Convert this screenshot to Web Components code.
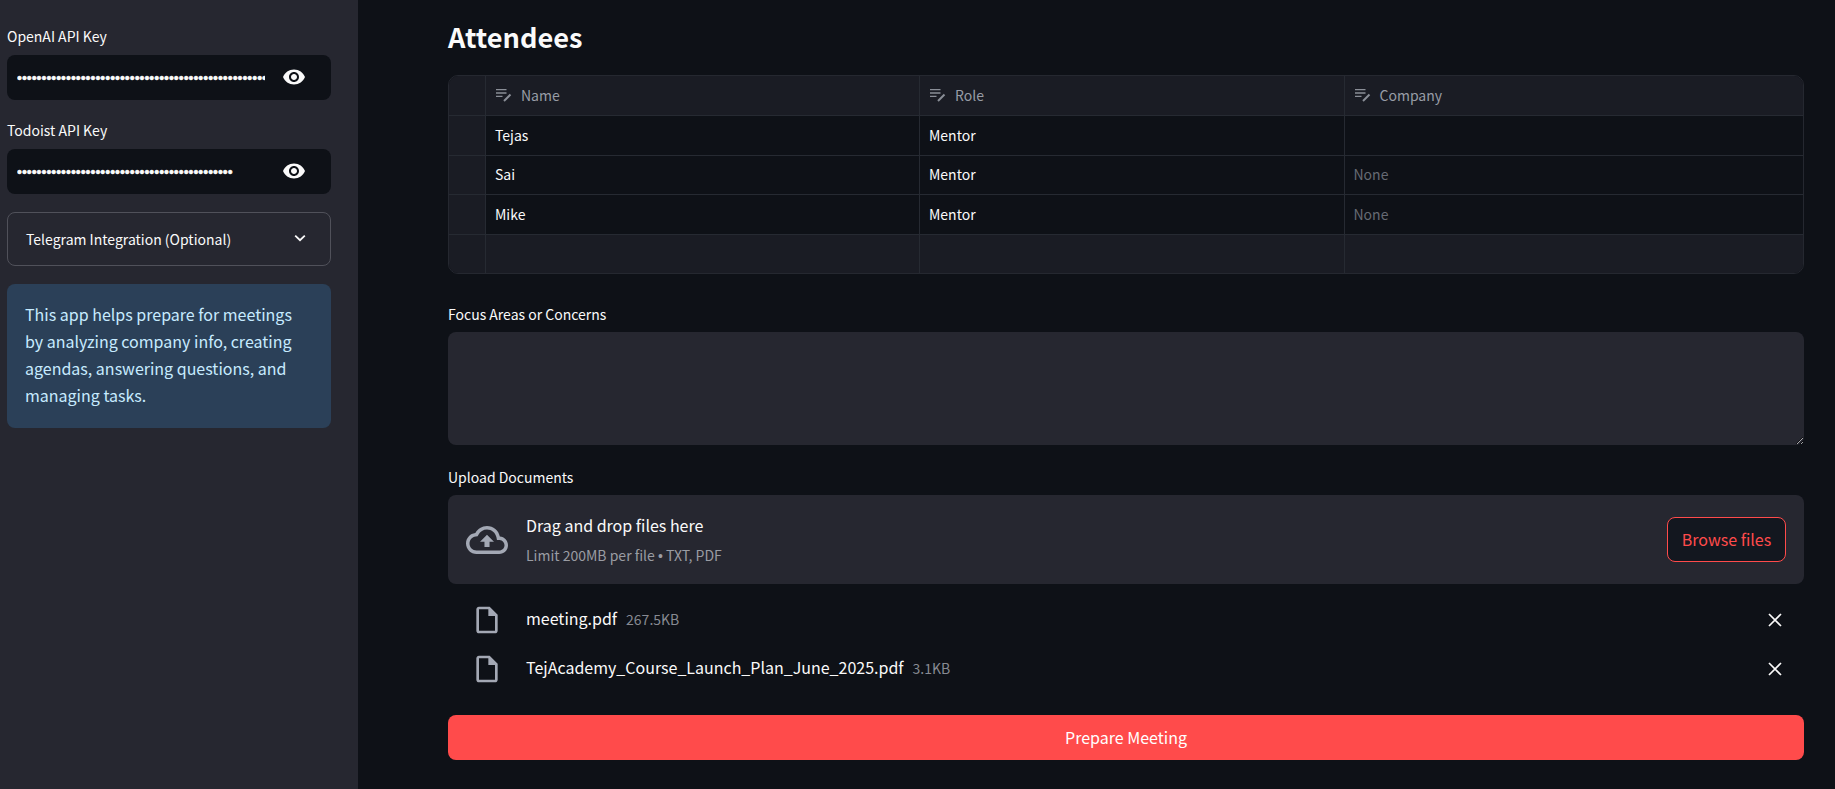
<!DOCTYPE html>
<html>
<head>
<meta charset="utf-8">
<style>
html, body { margin: 0; height: 100%; background: #0e1117; overflow: hidden; }
body { font-family: "Noto Sans CJK SC", "Source Sans Pro", "Noto Sans", sans-serif; color: #fafafa; }
</style>
</head>
<body>
<app-shell>
    <side-bar slot="side">
        <secret-input label="OpenAI API Key" length="60"></secret-input>
        <secret-input label="Todoist API Key" length="44"></secret-input>
        <tele-expander>Telegram Integration (Optional)</tele-expander>
        <info-box>This app helps prepare for meetings by analyzing company info, creating agendas, answering questions, and managing tasks.</info-box>
    </side-bar>
    <h-title>Attendees</h-title>
    <attendee-grid></attendee-grid>
    <text-box label="Focus Areas or Concerns"></text-box>
    <file-drop label="Upload Documents"></file-drop>
    <file-row name="meeting.pdf" size="267.5KB"></file-row>
    <file-row name="TejAcademy_Course_Launch_Plan_June_2025.pdf" size="3.1KB"></file-row>
    <main-button>Prepare Meeting</main-button>
</app-shell>

<script>
const notesIcon = `<svg width="16" height="14" viewBox="0 0 16 14" fill="none" stroke="currentColor" stroke-width="1.3"><path d="M0 1.6H10.5M0 5H10.5M0 8.4H6.5"/><path d="M8 13L14.5 6.5" stroke-width="2"/></svg>`;
const eyeIcon = `<svg width="24" height="24" viewBox="0 0 24 24" fill="#fafafa"><path d="M12 4.5C7 4.5 2.73 7.61 1 12c1.73 4.39 6 7.5 11 7.5s9.27-3.11 11-7.5c-1.73-4.39-6-7.5-11-7.5zM12 17c-2.76 0-5-2.24-5-5s2.24-5 5-5 5 2.24 5 5-2.24 5-5 5zm0-8c-1.66 0-3 1.34-3 3s1.34 3 3 3 3-1.34 3-3-1.34-3-3-3z"/></svg>`;

class AppShell extends HTMLElement {
    constructor() {
        super();
        this.attachShadow({ mode: "open" }).innerHTML = `
        <style>
        :host { display: flex; height: 789px; overflow: hidden; }
        aside { width: 358px; flex: none; background: #262730; }
        main { flex: 1; min-width: 0; padding: 0 31px 0 90px; display: flex; flex-direction: column; }
        </style>
        <aside><slot name="side"></slot></aside>
        <main><slot></slot></main>`;
    }
}

class SideBar extends HTMLElement {
    constructor() {
        super();
        this.attachShadow({ mode: "open" }).innerHTML = `
        <style>
        :host { display: flex; flex-direction: column; padding: 26px 27px 0 7px; }
        </style>
        <slot></slot>`;
    }
}

class SecretInput extends HTMLElement {
    connectedCallback() {
        const value = "x".repeat(+this.getAttribute("length"));
        this.attachShadow({ mode: "open" }).innerHTML = `
        <style>
        :host { display: block; margin-bottom: 18px; }
        :host(:first-child) { margin-bottom: 20px; }
        label { display: block; font-size: 14px; line-height: 20px; height: 22px; margin-bottom: 7px; color: #fafafa; }
        .box { height: 45px; background: #0e1117; border-radius: 8px; display: flex; align-items: center; padding-left: 10px; }
        input { all: unset; width: 248px; font: 14px "Liberation Sans", sans-serif; -webkit-text-stroke: 0.5px #fafafa; color: #fafafa; height: 45px; }
        .eye { margin-left: 17px; display: flex; margin-top: -2px; }
        </style>
        <label>${this.getAttribute("label")}</label>
        <div class="box"><input type="password" value="${value}" readonly><span class="eye">${eyeIcon}</span></div>`;
    }
}

class TeleExpander extends HTMLElement {
    constructor() {
        super();
        this.attachShadow({ mode: "open" }).innerHTML = `
        <style>
        :host { display: flex; align-items: center; height: 54px; box-sizing: border-box; border: 1px solid #50515a; border-radius: 8px; padding: 0 22px 0 18px; font-size: 14px; margin-bottom: 18px; color: #fafafa; justify-content: space-between; }
        svg { display: block; margin-top: -2px; }
        </style>
        <span><slot></slot></span>
        <svg width="16" height="16" viewBox="0 0 16 16" fill="none" stroke="#fafafa" stroke-width="1.8"><path d="M3.2 5.6L8 10.2L12.8 5.6"/></svg>`;
    }
}

class InfoBox extends HTMLElement {
    constructor() {
        super();
        this.attachShadow({ mode: "open" }).innerHTML = `
        <style>
        :host { display: block; background: #2b4058; color: #c7ebff; border-radius: 8px; padding: 17px 18px; height: 144px; box-sizing: border-box; font-size: 16px; line-height: 27px; }
        </style>
        <slot></slot>`;
    }
}

class HTitle extends HTMLElement {
    constructor() {
        super();
        this.attachShadow({ mode: "open" }).innerHTML = `
        <style>
        :host { display: block; font-size: 27.2px; font-weight: 600; line-height: 38px; padding-top: 17px; margin-bottom: 20px; color: #fafafa; }
        </style>
        <slot></slot>`;
    }
}

class AttendeeGrid extends HTMLElement {
    constructor() {
        super();
        const rows = [["Tejas", "Mentor", ""], ["Sai", "Mentor", "None"], ["Mike", "Mentor", "None"], null];
        const head = ["Name", "Role", "Company"].map(h =>
            `<div class="c h"><span class="i">${notesIcon}</span>${h}</div>`).join("");
        const body = rows.map(r => r
            ? `<div class="c g"></div>` + r.map(v => `<div class="c ${v === "None" ? "n" : ""}">${v}</div>`).join("")
            : `<div class="c g"></div><div class="c g"></div><div class="c g"></div><div class="c g"></div>`).join("");
        this.attachShadow({ mode: "open" }).innerHTML = `
        <style>
        :host { display: block; height: 199px; margin-bottom: 29px; }
        .t { display: grid; grid-template-columns: 37px 434px 424.5px 1fr; grid-template-rows: 40px 40px 39px 40px 39px; height: 199px; box-sizing: border-box; border: 1px solid #252830; border-radius: 10px; overflow: hidden; font-size: 14px; }
        .c { border-right: 1px solid #262a32; border-bottom: 1px solid #262a32; padding: 0 9px 2px; display: flex; align-items: center; color: #fafafa; box-sizing: border-box; }
        .c:nth-child(4n) { border-right: 0; }
        .c:nth-last-child(-n+4) { border-bottom: 0; }
        .h, .g { background: #1a1c24; }
        .h { color: #989ca6; padding-left: 10px; }
        .n { color: #666a73; }
        .i { display: flex; width: 25px; color: #8a8e97; }
        </style>
        <div class="t"><div class="c g"></div>${head}${body}</div>`;
    }
}

class TextBox extends HTMLElement {
    connectedCallback() {
        this.attachShadow({ mode: "open" }).innerHTML = `
        <style>
        :host { display: block; margin-bottom: 21px; }
        label { display: block; font-size: 14px; line-height: 22px; margin-bottom: 7px; height: 22px; }
        textarea { display: block; width: 100%; height: 113px; box-sizing: border-box; background: #262730; border: 0; border-radius: 8px; outline: 0; resize: vertical; padding: 16px; color: #fafafa; }
        </style>
        <label>${this.getAttribute("label")}</label>
        <textarea></textarea>`;
    }
}

class FileDrop extends HTMLElement {
    connectedCallback() {
        this.attachShadow({ mode: "open" }).innerHTML = `
        <style>
        :host { display: block; margin-bottom: 11px; }
        label { display: block; font-size: 14px; line-height: 22px; margin-bottom: 7px; height: 22px; }
        .zone { height: 89px; background: #262730; border-radius: 8px; display: flex; align-items: center; padding: 0 18px; box-sizing: border-box; }
        svg { display: block; margin-right: 18px; flex: none; }
        .txt { flex: 1; display: flex; flex-direction: column; gap: 8px; padding-top: 2px; }
        .a { font-size: 16px; line-height: 22px; }
        .b { font-size: 14px; line-height: 22px; color: #9a9ca3; }
        .b span { font-family: "Liberation Sans", sans-serif; }
        button { all: unset; width: 119px; height: 45px; box-sizing: border-box; text-align: center; font: 16px/43px "Noto Sans CJK SC", sans-serif; color: #ff4b4b; background: #13171f; border: 1px solid #ff4b4b; border-radius: 8px; }
        </style>
        <label>${this.getAttribute("label")}</label>
        <div class="zone">
            <svg width="42" height="42" viewBox="0 0 24 24" fill="#a3a8b4"><path d="M19.35 10.04C18.67 6.59 15.64 4 12 4 9.11 4 6.6 5.64 5.35 8.04 2.34 8.36 0 10.91 0 14c0 3.31 2.69 6 6 6h13c2.76 0 5-2.24 5-5 0-2.64-2.05-4.78-4.65-4.96zM19 18H6c-2.21 0-4-1.79-4-4 0-2.05 1.53-3.76 3.56-3.97l1.07-.11.5-.95C8.08 7.14 9.94 6 12 6c2.62 0 4.88 1.86 5.39 4.43l.3 1.5 1.53.11c1.56.1 2.78 1.41 2.78 2.96 0 1.65-1.35 3-3 3zM8 13h2.55v3h2.9v-3H16l-4-4z"/></svg>
            <div class="txt"><div class="a">Drag and drop files here</div><div class="b">Limit 200MB per file <span>•</span> TXT, PDF</div></div>
            <button>Browse files</button>
        </div>`;
    }
}

class FileRow extends HTMLElement {
    connectedCallback() {
        this.attachShadow({ mode: "open" }).innerHTML = `
        <style>
        :host { display: flex; align-items: center; height: 49px; padding-left: 23px; padding-right: 22px; }
        .ic { display: flex; margin-right: 23px; }
        .name { font-size: 16px; margin-right: 9px; padding-bottom: 3px; }
        .size { font-size: 14px; color: #878a92; flex: 1; padding-bottom: 2px; }
        </style>
        <span class="ic"><svg width="32" height="32" viewBox="0 0 24 24" fill="#a3a8b4"><path d="M14 2H6c-1.1 0-2 .9-2 2v16c0 1.1.9 2 2 2h12c1.1 0 2-.9 2-2V8l-6-6zm4 18H6V4h7v5h5v11z"/></svg></span>
        <span class="name">${this.getAttribute("name")}</span>
        <span class="size">${this.getAttribute("size")}</span>
        <svg width="14" height="14" viewBox="0 0 14 14" stroke="#fafafa" stroke-width="1.7"><path d="M1 1L13 13M13 1L1 13"/></svg>`;
    }
}

class MainButton extends HTMLElement {
    constructor() {
        super();
        this.attachShadow({ mode: "open" }).innerHTML = `
        <style>
        :host { display: flex; align-items: center; justify-content: center; height: 45px; padding-bottom: 2px; box-sizing: border-box; background: #ff4b4b; border-radius: 8px; font-size: 16px; color: #fff; margin-top: 22px; }
        </style>
        <slot></slot>`;
    }
}

customElements.define("app-shell", AppShell);
customElements.define("side-bar", SideBar);
customElements.define("secret-input", SecretInput);
customElements.define("tele-expander", TeleExpander);
customElements.define("info-box", InfoBox);
customElements.define("h-title", HTitle);
customElements.define("attendee-grid", AttendeeGrid);
customElements.define("text-box", TextBox);
customElements.define("file-drop", FileDrop);
customElements.define("file-row", FileRow);
customElements.define("main-button", MainButton);
</script>
</body>
</html>
